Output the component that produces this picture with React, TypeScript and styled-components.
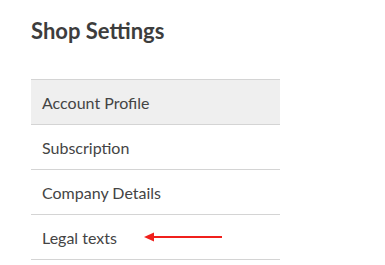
import React from "react";
import styled, { createGlobalStyle } from "styled-components";

const Global = createGlobalStyle`
  html, body { margin: 0; padding: 0; background: #ffffff; }
  body { font-family: Lato, "Noto Sans", sans-serif; color: #444; }
`;

const Page = styled.div`
  width: 385px;
  height: 265px;
  padding: 0 0 0 31px;
  box-sizing: border-box;
  overflow: hidden;
`;

const Title = styled.h1`
  margin: 0;
  padding-top: 18px;
  height: 79px;
  box-sizing: border-box;
  font-size: 22px;
  font-weight: 700;
  color: #3d3d3d;
  line-height: 26px;
`;

const Menu = styled.ul`
  list-style: none;
  margin: 0;
  padding: 0;
  width: 249px;
  border-top: 1px solid #d4d4d4;
`;

const Item = styled.li<{ $active?: boolean }>`
  display: flex;
  align-items: center;
  height: 44px;
  padding-left: 11px;
  border-bottom: 1px solid #d4d4d4;
  background: ${(p) => (p.$active ? "#efefef" : "transparent")};
  font-size: 16px;
  color: #444;
`;

const Arrow = styled.svg`
  margin-left: 27px;
  display: block;
`;

export default function App() {
  const items = ["Account Profile", "Subscription", "Company Details", "Legal texts"];
  return (
    <Page>
      <Global />
      <Title>Shop Settings</Title>
      <Menu>
        {items.map((t, i) => (
          <Item key={t} $active={i === 0}>
            {t}
            {t === "Legal texts" && (
              <Arrow width="78" height="10" viewBox="0 0 78 10">
                <polygon points="0,5 10,0.5 10,9.5" fill="#f0201c" />
                <rect x="8" y="4" width="70" height="2" fill="#f0201c" />
              </Arrow>
            )}
          </Item>
        ))}
      </Menu>
    </Page>
  );
}
